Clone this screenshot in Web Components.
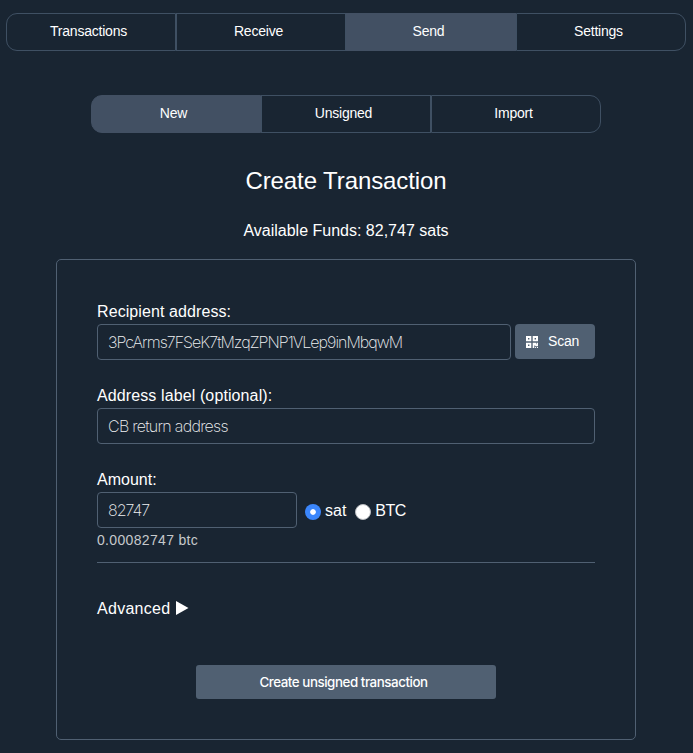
<!DOCTYPE html>
<html lang="en">
<head>
<meta charset="utf-8">
<title>Create Transaction</title>
<style>
  html { background: #192532; }
  body {
    margin: 0; height: 753px; overflow: hidden;
    background: #192532; color: #fff;
    font: 16px/18px "Liberation Sans", Arial, sans-serif;
    --line: #3f5063; --border: #506072; --button: #506072; --active: #425063;
  }
</style>
</head>
<body>
<wallet-page></wallet-page>
<script>
function define(name, html) {
  const template = document.createElement('template');
  template.innerHTML = html;
  customElements.define(name, class extends HTMLElement {
    constructor() {
      super();
      this.attachShadow({ mode: 'open' }).append(template.content.cloneNode(true));
    }
  });
}

define('tab-bar', `
  <style>:host { display: flex; width: max-content; height: 38px; }</style>
  <slot></slot>`);

define('tab-item', `
  <style>
    :host { box-sizing: border-box; display: flex; justify-content: center; width: 170px; height: 38px; padding: 9px 5px 0 0;
      border: 1px solid var(--line); font-size: 14px; line-height: 17px; letter-spacing: -.22px; cursor: pointer; }
    :host([active]) { background: var(--active); border-color: var(--active); }
    :host(:first-child) { border-radius: 11px 0 0 11px; }
    :host(:last-child) { border-radius: 0 11px 11px 0; }
  </style>
  <span><slot></slot></span>`);

define('form-card', `
  <style>
    :host { box-sizing: border-box; display: flex; flex-direction: column; width: 580px; height: 481px; padding: 43px 40px 0;
      border: 1px solid var(--border); border-radius: 5px; }
  </style>
  <slot></slot>`);

define('form-field', `
  <style>
    :host { display: block; height: 84px; }
    :host([compact]) { height: 61px; }
    .row { display: flex; align-items: flex-start; gap: 4px; margin-top: 3px; }
  </style>
  <div><slot name="label"></slot></div>
  <div class="row"><slot></slot></div>`);

define('text-box', `
  <style>
    :host { box-sizing: border-box; display: block; flex: 1; height: 36px; padding: 8px 10px;
      border: 1px solid var(--border); border-radius: 4px;
      font: 200 16px/19px Inter, sans-serif; color: #f0f1f2; white-space: nowrap; }
    :host([small]) { flex: 0 0 200px; }
  </style>
  <slot></slot>`);

define('scan-button', `
  <style>
    :host { box-sizing: border-box; display: flex; width: 80px; height: 35px; padding: 9px 0 0 11px; gap: 10px;
      border-radius: 4px; background: var(--button); font-size: 14px; line-height: 17px; letter-spacing: -.2px; cursor: pointer; }
    svg { display: block; margin-top: 3px; }
  </style>
  <svg width="12" height="12" viewBox="0 0 12 12" fill="#fff">
    <path fill-rule="evenodd" d="M0 0h5.3v5.3H0zM2 2v1.4h1.4V2zM6.7 0H12v5.3H6.7zM8.6 2v1.4H10V2zM0 6.7h5.3V12H0zM2 8.6V10h1.4V8.6z"/>
    <path d="M6.7 6.7h3.6v1.5h.5V6.7H12v3.6H9.2v-.8h-.9V12H6.7zM9.1 11h1v1h-1zM11 11h1v1h-1z"/>
  </svg>
  <span><slot></slot></span>`);

define('unit-radio', `
  <style>
    :host { display: flex; gap: 4px; }
    i { box-sizing: border-box; width: 16px; height: 16px; margin-top: 2px; border-radius: 50%; background: #fff; border: 1px solid #b9bcc0; }
    :host([checked]) i { border: 0; background: radial-gradient(circle, #fff 0 2.4px, #3b86fb 3.2px); }
  </style>
  <i></i><span><slot></slot></span>`);

define('action-button', `
  <style>
    :host { box-sizing: border-box; display: flex; justify-content: center; width: 300px; height: 34px; padding: 9px 5px 0 0;
      border-radius: 3px; background: var(--button); font: 500 13.333px/16px Inter, sans-serif; letter-spacing: -.44px; cursor: pointer; }
  </style>
  <span><slot></slot></span>`);

define('wallet-page', `
  <style>
    :host { display: flex; flex-direction: column; align-items: center; box-sizing: border-box; width: 692px; padding-top: 13px; }
    .sub { margin-top: 44px; }
    h1 { margin: 34px 0 0; font-size: 24px; line-height: 28px; font-weight: 400; letter-spacing: -.1px; }
    .funds { margin-top: 27px; }
    form-card { margin-top: 19px; }
    .units { display: flex; gap: 9px; padding: 10px 0 0 4px; }
    .units unit-radio + unit-radio { letter-spacing: -.4px; }
    .units unit-radio:first-child { letter-spacing: .1px; margin-right: -.5px; }
    .hint { font-size: 14px; line-height: 16px; color: #c6c9cc; letter-spacing: .33px; }
    .rule { height: 1px; margin-top: 14px; background: var(--border); }
    .advanced { display: flex; gap: 6px; margin-top: 37px; }
    .advanced span { letter-spacing: .28px; }
    .advanced svg { margin-top: 1px; }
    action-button { align-self: center; margin-top: 47px; }
  </style>
  <tab-bar>
    <tab-item>Transactions</tab-item><tab-item>Receive</tab-item><tab-item active>Send</tab-item><tab-item>Settings</tab-item>
  </tab-bar>
  <tab-bar class="sub">
    <tab-item active>New</tab-item><tab-item>Unsigned</tab-item><tab-item>Import</tab-item>
  </tab-bar>
  <h1>Create Transaction</h1>
  <div class="funds">Available Funds: 82,747 sats</div>
  <form-card>
    <form-field><span slot="label" style="letter-spacing:.09px">Recipient address:</span>
      <text-box style="letter-spacing:-.97px">3PcArms7FSeK7tMzqZPNP1VLep9inMbqwM</text-box><scan-button>Scan</scan-button>
    </form-field>
    <form-field><span slot="label" style="letter-spacing:.11px">Address label (optional):</span>
      <text-box style="letter-spacing:-.72px">CB return address</text-box>
    </form-field>
    <form-field compact><span slot="label">Amount:</span>
      <text-box small style="letter-spacing:-.97px">82747</text-box>
      <div class="units"><unit-radio checked>sat</unit-radio><unit-radio>BTC</unit-radio></div>
    </form-field>
    <div class="hint">0.00082747 btc</div>
    <div class="rule"></div>
    <div class="advanced"><span>Advanced</span><svg width="13" height="14" viewBox="0 0 13 14"><path d="M0 0 12.5 7 0 14z" fill="#fff"/></svg></div>
    <action-button>Create unsigned transaction</action-button>
  </form-card>`);
</script>
</body>
</html>
